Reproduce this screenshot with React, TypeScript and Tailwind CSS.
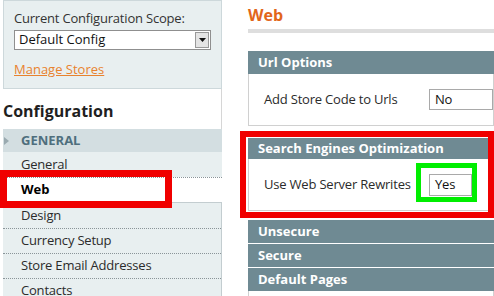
import React from "react";

const font = { fontFamily: '"Open Sans", "Noto Sans", sans-serif' };

function NavRow({ label, first }: { label: string; first?: boolean }) {
  return (
    <div
      className={
        "flex h-[25px] shrink-0 items-center pl-[18px] text-[13px] tracking-[-0.2px] text-[#2b2b2b] " +
        (first ? "" : "border-t border-dotted border-[#8a9498]")
      }
    >
      {label}
    </div>
  );
}

function SectionHeader({ title }: { title: string }) {
  return (
    <div className="flex h-[23px] shrink-0 items-center bg-[#6f8a93] pl-[10px] text-[13px] font-bold text-white">
      {title}
    </div>
  );
}

export default function App() {
  return (
    <div
      className="relative flex h-[296px] w-[494px] overflow-hidden bg-white"
      style={font}
    >
      {/* left column */}
      <div className="ml-[3px] flex w-[219px] shrink-0 flex-col">
        <div className="h-[89px] shrink-0 border border-[#cdd8db] bg-[#e8eff0] px-[10px] pt-[8px]">
          <div className="text-[13px] leading-[18px] tracking-[-0.2px] text-[#333]">
            Current Configuration Scope:
          </div>
          <div className="mt-[3px] flex h-[20px] w-[197px] items-center justify-between border border-[#8f8f8f] bg-white pl-[4px] pr-[1px] text-[13px] text-[#111]">
            <span>Default Config</span>
            <span className="flex h-[16px] w-[14px] items-center justify-center border border-[#999] bg-[#e4e4e4]">
              <svg width="7" height="4" viewBox="0 0 7 4">
                <path d="M0 0h7L3.5 4z" fill="#111" />
              </svg>
            </span>
          </div>
          <div className="mt-[10px] text-[13px] text-[#e8822e] underline">
            Manage Stores
          </div>
        </div>
        <div className="flex h-[40px] shrink-0 items-center border-r border-[#d6d6d6] pt-[4px] text-[16px] font-bold text-[#1f1f1f]">
          Configuration
        </div>
        <div className="flex h-[23px] shrink-0 items-center bg-[#d3dee1]">
          <svg width="5" height="8" viewBox="0 0 5 8" className="ml-[1px]">
            <path d="M0 0l5 4-5 4z" fill="#9aaab0" />
          </svg>
          <span className="ml-[12px] text-[13px] font-bold text-[#4e6e7d]">
            GENERAL
          </span>
        </div>
        <div className="shrink-0 bg-[#e8eff0]">
          <NavRow label="General" first />
        </div>
        <div className="flex h-[25px] shrink-0 items-center border-t border-dotted border-[#8a9498] bg-white pl-[18px] text-[13px] font-bold text-black">
          Web
        </div>
        <div className="shrink-0 border-t border-r border-[#c3cdd0] bg-[#e8eff0]">
          <NavRow label="Design" first />
          <NavRow label="Currency Setup" />
          <NavRow label="Store Email Addresses" />
          <NavRow label="Contacts" />
        </div>
      </div>

      {/* right column */}
      <div className="ml-[26px] flex flex-1 flex-col">
        <div className="flex h-[29px] shrink-0 items-center text-[16px] font-bold text-[#e2661a]">
          Web
        </div>
        <div className="h-[4px] shrink-0 bg-[#dedede]" />
        <div className="h-[18px] shrink-0" />
        <SectionHeader title="Url Options" />
        <div className="flex h-[52px] shrink-0 items-center border-x border-b border-[#d0d0d0] pl-[15px] text-[13px] tracking-[-0.2px] text-[#2b2b2b]">
          <span className="w-[165px]">Add Store Code to Urls</span>
          <span className="flex h-[21px] flex-1 items-center border border-[#a9a9a9] pl-[5px] text-[#111]">
            No
          </span>
        </div>
        <div className="h-[12px] shrink-0" />
        <div className="flex h-[21px] shrink-0 items-center bg-[#6f8a93] pl-[10px] text-[13px] font-bold text-white">
          Search Engines Optimization
        </div>
        <div className="flex h-[52px] shrink-0 items-center border-x border-b border-[#d0d0d0] pl-[15px] text-[13px] tracking-[-0.2px] text-[#2b2b2b]">
          <span className="w-[165px]">Use Web Server Rewrites</span>
          <span className="flex h-[22px] w-[43px] items-center border border-[#a9a9a9] pl-[5px] text-[#111]">
            Yes
          </span>
        </div>
        <div className="h-[9px] shrink-0" />
        <SectionHeader title="Unsecure" />
        <div className="h-[1px] shrink-0" />
        <SectionHeader title="Secure" />
        <div className="h-[1px] shrink-0" />
        <SectionHeader title="Default Pages" />
        <div className="flex-1 border-x border-[#d0d0d0]" />
      </div>

      {/* annotation overlays */}
      <div className="pointer-events-none absolute left-0 top-[170px] h-[38px] w-[172px] border-[7px] border-[#f00000]" />
      <div className="pointer-events-none absolute left-[240px] top-[131px] h-[87px] w-[254px] border-[6px] border-[#f00000]" />
      <div className="pointer-events-none absolute left-[416px] top-[163px] h-[39px] w-[61px] border-[5px] border-[#00ee00]" />
    </div>
  );
}
